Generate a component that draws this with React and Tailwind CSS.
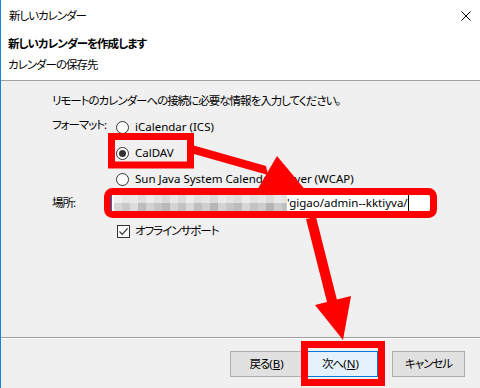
import React from "react";

const topRow = [
  "bg-[#eeeeee]", "bg-[#e6e6e6]", "bg-[#e9e9e9]", "bg-[#dedede]", "bg-[#ebebeb]", "bg-[#e2e2e2]",
  "bg-[#d9d9d9]", "bg-[#e8e8e8]", "bg-[#dcdcdc]", "bg-[#ececec]", "bg-[#e0e0e0]", "bg-[#e6e6e6]",
  "bg-[#dadada]", "bg-[#eaeaea]", "bg-[#e3e3e3]", "bg-[#dddddd]", "bg-[#ebebeb]", "bg-[#e1e1e1]",
  "bg-[#e7e7e7]", "bg-[#dbdbdb]", "bg-[#e9e9e9]", "bg-[#e4e4e4]",
];
const bottomRow = [
  "bg-[#d6d6d6]", "bg-[#c9c9c9]", "bg-[#dcdcdc]", "bg-[#bdbdbd]", "bg-[#d2d2d2]", "bg-[#c4c4c4]",
  "bg-[#b9b9b9]", "bg-[#d4d4d4]", "bg-[#c2c2c2]", "bg-[#d8d8d8]", "bg-[#bfbfbf]", "bg-[#cfcfcf]",
  "bg-[#b7b7b7]", "bg-[#d3d3d3]", "bg-[#c6c6c6]", "bg-[#bcbcbc]", "bg-[#d5d5d5]", "bg-[#c3c3c3]",
  "bg-[#cdcdcd]", "bg-[#b5b5b5]", "bg-[#cccccc]", "bg-[#c1c1c1]",
];

function Radio({ checked }) {
  return (
    <span className="w-[13px] h-[13px] rounded-full border border-[#333333] bg-white flex items-center justify-center shrink-0">
      {checked && <span className="w-[7px] h-[7px] rounded-full bg-[#333333]" />}
    </span>
  );
}

function RadioRow({ checked, children }) {
  return (
    <div className="h-[26px] flex items-center pl-[5px]">
      <Radio checked={checked} />
      <span className="ml-[6px] leading-[18px] whitespace-nowrap">{children}</span>
    </div>
  );
}

const jp = "tracking-[-1px] whitespace-nowrap";

export default function App() {
  return (
    <div className="relative w-[480px] h-[388px] overflow-hidden bg-[#f0f0f0] border-l border-[#1883d7] flex flex-col font-['Noto_Sans','Noto_Sans_CJK_JP',sans-serif] text-[11.5px] text-black [font-feature-settings:'palt']">
      {/* Title bar */}
      <div className="h-[31px] shrink-0 bg-white flex items-center justify-between pl-[8px] pr-[9px]">
        <span className={`leading-[18px] ${jp}`}>新しいカレンダー</span>
        <svg width="10" height="10" viewBox="0 0 10 10">
          <path d="M0.5 0.5 L9.5 9.5 M9.5 0.5 L0.5 9.5" stroke="#000" strokeWidth="1" />
        </svg>
      </div>

      {/* Header */}
      <div className="h-[50px] shrink-0 bg-white border-b border-[#a0a0a0] pl-[7px] pt-[4px]">
        <div className={`font-bold leading-[18px] ${jp}`}>新しいカレンダーを作成します</div>
        <div className={`leading-[18px] mt-[3px] ${jp}`}>カレンダーの保存先</div>
      </div>

      {/* Content */}
      <div className="flex-1 pt-[11px] pl-[51px]">
        <div className={`leading-[18px] ${jp}`}>リモートのカレンダーへの接続に必要な情報を入力してください。</div>

        <div className="flex mt-[4px]">
          <div className={`w-[59px] pt-[2px] leading-[18px] ${jp}`}>フォーマット:</div>
          <div className="flex flex-col">
            <RadioRow>iCalendar (ICS)</RadioRow>
            <RadioRow checked>CalDAV</RadioRow>
            <RadioRow>Sun Java System Calendar Server (WCAP)</RadioRow>
          </div>
        </div>

        <div className="flex items-center h-[22px]">
          <div className={`w-[59px] leading-[18px] ${jp}`}>場所:</div>
          <div className="w-[320px] h-[22px] bg-white border border-[#0078d7] flex items-center pl-[2px] overflow-hidden">
            <div className="w-[173px] h-[16px] overflow-hidden flex flex-col shrink-0">
              <div className="flex h-[8px]">
                {topRow.map((c, i) => (
                  <span key={i} className={`w-[8px] h-[8px] shrink-0 ${c}`} />
                ))}
              </div>
              <div className="flex h-[8px]">
                {bottomRow.map((c, i) => (
                  <span key={i} className={`w-[8px] h-[8px] shrink-0 ${c}`} />
                ))}
              </div>
            </div>
            <span className="leading-[18px] whitespace-nowrap">'gigao/admin--kktiyva/</span>
            <span className="w-px h-[18px] bg-black shrink-0" />
          </div>
        </div>

        <div className="h-[26px] mt-[4px] flex items-center pl-[65px]">
          <span className="w-[13px] h-[13px] border border-[#333333] bg-white flex items-center justify-center shrink-0">
            <svg width="11" height="11" viewBox="0 0 11 11">
              <path d="M1.5 5.5 L4.2 8.3 L9.6 2.4" stroke="#333" strokeWidth="1.2" fill="none" />
            </svg>
          </span>
          <span className={`ml-[5px] leading-[18px] ${jp}`}>オフラインサポート</span>
        </div>
      </div>

      {/* Footer */}
      <div className="h-[51px] shrink-0 flex flex-col">
        <div className="h-px bg-[#a0a0a0]" />
        <div className="h-px bg-white" />
        <div className="flex justify-end pr-[15px] pt-[12px]">
          <button className="w-[73px] h-[26px] bg-[#e1e1e1] border border-[#adadad] flex items-center justify-center leading-[18px] whitespace-nowrap">
            <span className="tracking-[-1px]">戻る</span>(<span className="underline">B</span>)
          </button>
          <button className="w-[75px] h-[26px] bg-[#e5f1fb] border border-[#0078d7] flex items-center justify-center leading-[18px] whitespace-nowrap">
            <span className="tracking-[-1px]">次へ</span>(<span className="underline">N</span>)
          </button>
          <button className={`ml-[14px] w-[73px] h-[26px] bg-[#e1e1e1] border border-[#adadad] flex items-center justify-center leading-[18px] ${jp}`}>
            キャンセル
          </button>
        </div>
      </div>

      {/* Red annotations */}
      <svg
        className="absolute top-0 left-[-1px] pointer-events-none"
        width="480"
        height="388"
        viewBox="0 0 480 388"
      >
        <g fill="#ff0000" stroke="none">
          <polygon points="192,145 194,154 268,175 266,166" />
          <polygon points="277,156 256,192 307,192" />
          <polygon points="306,219 316,217 338,304 328,306" />
          <polygon points="315,305 351,296 343,340" />
        </g>
        <g fill="none" stroke="#ff0000" strokeWidth="7">
          <rect x="111.5" y="136.5" width="79" height="28.5" />
          <rect x="107.5" y="191.5" width="326" height="23" rx="5" />
          <rect x="304.5" y="344.5" width="77" height="38" />
        </g>
      </svg>
    </div>
  );
}
